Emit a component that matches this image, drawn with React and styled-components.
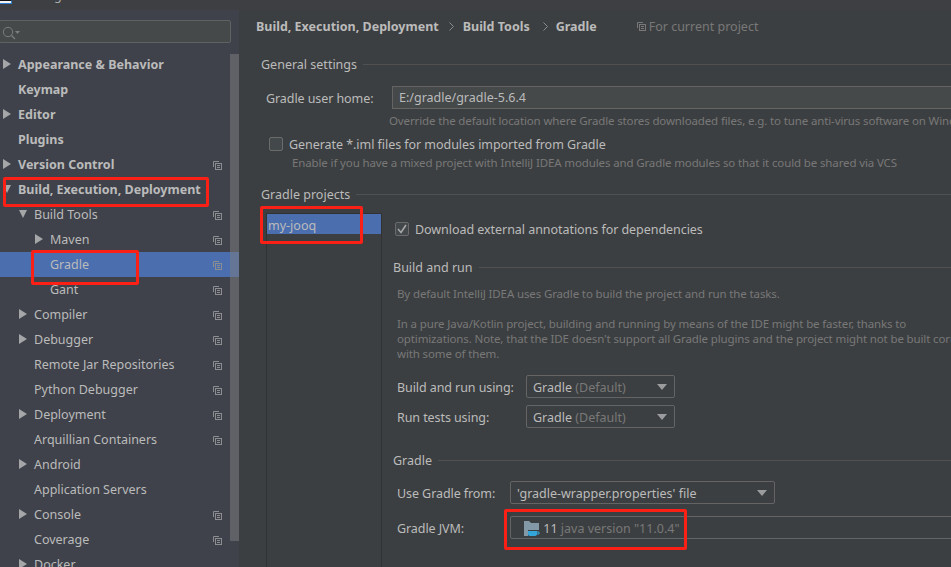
import React from 'react';
import styled, { createGlobalStyle } from 'styled-components';

const GlobalStyle = createGlobalStyle`
  html, body {
    margin: 0;
    height: 100%;
    overflow: hidden;
    background: #3c3f41;
  }
  #root {
    height: 100%;
  }
`;

const Page = styled.div`
  position: relative;
  width: 951px;
  height: 567px;
  overflow: hidden;
  background: #3c3f41;
  color: #bbbbbb;
  font-family: "Noto Sans", "Liberation Sans", sans-serif;
  font-size: 12.5px;
  line-height: 17px;
  display: flex;
  flex-direction: column;
`;

const TitleBar = styled.div`
  height: 10px;
  flex: none;
  overflow: hidden;
  display: flex;
  align-items: flex-start;
  background: #3d3f42;
`;

const AppIcon = styled.span`
  width: 11px;
  height: 2px;
  flex: none;
  background: #f2f2f2;
  border-top: 1px solid #111111;
  border-right: 1px solid #2f7fd0;
  border-bottom: 1px solid #2f7fd0;
`;

const TitleText = styled.span`
  margin: -13px 0 0 8px;
  color: #a9abad;
`;

const Body = styled.div`
  flex: 1;
  min-height: 0;
  display: flex;
`;

const Sidebar = styled.aside`
  position: relative;
  width: 239px;
  flex: none;
  overflow: hidden;
  background: #3f424a;
  padding-top: 10px;
  box-sizing: border-box;
`;

const SearchBox = styled.div`
  height: 23px;
  width: 232px;
  margin-left: -1px;
  box-sizing: border-box;
  display: flex;
  align-items: center;
  padding-left: 3px;
  border: 1px solid #5f6261;
  border-radius: 2px;
  background: #45494a;
`;

const Tree = styled.div`
  margin-top: 9px;
`;

const Row = styled.div`
  height: 25px;
  display: flex;
  align-items: center;
  padding-left: ${props => props.$level * 16 + 18}px;
  background: ${props => (props.$selected ? '#4b6eaf' : 'transparent')};
  font-weight: ${props => (props.$bold ? 700 : 400)};
  color: #bbbbbb;
  position: relative;
`;

const RowArrow = styled.span`
  position: absolute;
  left: ${props => props.$level * 16 + 3}px;
  top: ${props => (props.$open ? 8 : 7)}px;
  width: 0;
  height: 0;
  ${props => (props.$open
    ? 'border-left: 4px solid transparent; border-right: 4px solid transparent; border-top: 8px solid #a4a6a8;'
    : 'border-top: 5px solid transparent; border-bottom: 5px solid transparent; border-left: 8px solid #a4a6a8;')}
`;

const RowCopy = styled.span`
  position: absolute;
  left: 213px;
  top: 9px;
  display: flex;
`;

const Scrollbar = styled.div`
  position: absolute;
  left: 230px;
  top: 44px;
  width: 9px;
  height: 487px;
  background: rgba(122, 124, 128, 0.55);
`;

const Content = styled.main`
  flex: 1;
  min-width: 0;
  overflow: hidden;
  padding: 8px 0 0 17px;
`;

const Breadcrumb = styled.div`
  height: 17px;
  display: flex;
  align-items: center;
  font-weight: 700;
  color: #bbbbbb;
  white-space: nowrap;
`;

const CrumbArrow = styled.svg`
  margin: 0 ${props => props.$right}px 0 ${props => props.$left}px;
  flex: none;
`;

const ProjectHint = styled.span`
  display: flex;
  align-items: center;
  gap: 3px;
  margin-left: 40px;
  font-weight: 400;
  color: #787878;
`;

const Section = styled.div`
  display: flex;
  align-items: center;
  gap: 6px;
  margin: ${props => props.$top}px 0 0 ${props => props.$left || 5}px;
  height: 17px;
  white-space: nowrap;
`;

const SectionLine = styled.span`
  flex: 1;
  height: 1px;
  background: #515151;
`;

const FieldRow = styled.div`
  display: flex;
  align-items: center;
  height: 23px;
  margin: ${props => props.$top}px 0 0 ${props => props.$left}px;
  white-space: nowrap;
`;

const FieldLabel = styled.span`
  width: ${props => props.$width}px;
  flex: none;
  padding-top: 2px;
  letter-spacing: -0.08px;
`;

const TextField = styled.div`
  flex: 1;
  height: 23px;
  box-sizing: border-box;
  margin-right: -4px;
  padding: 2px 6px;
  border: 1px solid #646464;
  border-right: 0;
  background: #45494a;
`;

const Combo = styled.div`
  width: ${props => props.$width}px;
  height: 23px;
  flex: none;
  box-sizing: border-box;
  display: flex;
  align-items: center;
  padding: 2px ${props => props.$inset || 6}px 0;
  border: 1px solid #646464;
  border-radius: 2px;
  position: relative;
`;

const ComboCaret = styled.span`
  position: absolute;
  right: 7px;
  top: 8px;
  width: 0;
  height: 0;
  border-left: 5px solid transparent;
  border-right: 5px solid transparent;
  border-top: 6px solid #9a9c9e;
`;

const Muted = styled.span`
  color: #787878;
  white-space: pre;
`;

const Hint = styled.div`
  color: #787878;
  margin: ${props => props.$top || 0}px 0 0 ${props => props.$left}px;
  white-space: nowrap;
  font-size: 11.5px;
  letter-spacing: -0.13px;
  line-height: 15px;
`;

const CheckRow = styled.label`
  display: flex;
  align-items: center;
  gap: 6px;
  height: 17px;
  margin: ${props => props.$top}px 0 0 ${props => props.$left}px;
  white-space: nowrap;
`;

const CheckText = styled.span`
  padding-top: 2px;
  letter-spacing: -0.05px;
`;

const Box = styled.span`
  width: 14px;
  height: 14px;
  box-sizing: border-box;
  flex: none;
  display: flex;
  align-items: center;
  justify-content: center;
  border: 1px solid #6b6b6b;
  border-radius: 2px;
  background: #43494a;
`;

const Projects = styled.div`
  display: flex;
  margin: 10px 0 0 10px;
  height: 360px;
`;

const ProjectList = styled.div`
  width: 116px;
  flex: none;
  box-sizing: border-box;
  border: 1px solid #323232;
  border-width: 1px 1px 0;
`;

const ProjectItem = styled.div`
  height: 20px;
  padding-left: 1px;
  background: #4b6eaf;
  line-height: 23px;
`;

const ProjectPane = styled.div`
  flex: 1;
  min-width: 0;
  padding-left: 10px;
`;

const Note = styled.div`
  margin: ${props => props.$top}px 0 0 5px;
  color: #787878;
  font-size: 11.5px;
  letter-spacing: -0.13px;
  line-height: 15px;
  white-space: nowrap;
`;

const Mark = styled.div`
  position: absolute;
  left: ${props => props.$x}px;
  top: ${props => props.$y}px;
  width: ${props => props.$w}px;
  height: ${props => props.$h}px;
  box-sizing: border-box;
  border: 3px solid #fb2016;
  border-radius: 2px;
  pointer-events: none;
`;

const CopyIcon = ({ color = '#8b8d90' }) => (
  <svg width="9" height="9" viewBox="0 0 9 9" fill="none" stroke={color} strokeWidth="1">
    <path d="M0.5 6V0.5H6" />
    <rect x="2.5" y="2.5" width="6" height="6" />
    <path d="M4 4.5H7M4 6.5H7" />
  </svg>
);

const SearchIcon = () => (
  <svg width="19" height="16" viewBox="0 0 19 16" fill="none">
    <circle cx="5" cy="8" r="4.7" stroke="#7c7f80" strokeWidth="1" />
    <path d="M8.5 11.5L12 15" stroke="#7c7f80" strokeWidth="1.3" />
    <path d="M12 7H17L14.5 10Z" fill="#7c7f80" />
  </svg>
);

const JdkIcon = () => (
  <svg width="16" height="15" viewBox="0 0 16 15">
    <path d="M0 0H5L7 2H15V9H4V15H0Z" fill="#8399a8" />
    <path d="M4 10H13V13C13 14.5 12 15 10.5 15H6.5C5 15 4 14.5 4 13Z" fill="#33a5d8" />
    <path d="M13 11H15V13H13" fill="none" stroke="#33a5d8" />
  </svg>
);

const TREE = [
  { label: 'Appearance & Behavior', level: 0, bold: true, arrow: 'closed' },
  { label: 'Keymap', level: 0, bold: true },
  { label: 'Editor', level: 0, bold: true, arrow: 'closed' },
  { label: 'Plugins', level: 0, bold: true },
  { label: 'Version Control', level: 0, bold: true, arrow: 'closed', copy: true },
  { label: 'Build, Execution, Deployment', level: 0, bold: true, arrow: 'open' },
  { label: 'Build Tools', level: 1, arrow: 'open', copy: true },
  { label: 'Maven', level: 2, arrow: 'closed', copy: true },
  { label: 'Gradle', level: 2, selected: true, copy: true },
  { label: 'Gant', level: 2, copy: true },
  { label: 'Compiler', level: 1, arrow: 'closed', copy: true },
  { label: 'Debugger', level: 1, arrow: 'closed', copy: true },
  { label: 'Remote Jar Repositories', level: 1, copy: true },
  { label: 'Python Debugger', level: 1, copy: true },
  { label: 'Deployment', level: 1, arrow: 'closed', copy: true },
  { label: 'Arquillian Containers', level: 1, copy: true },
  { label: 'Android', level: 1, arrow: 'closed' },
  { label: 'Application Servers', level: 1 },
  { label: 'Console', level: 1, arrow: 'closed', copy: true },
  { label: 'Coverage', level: 1, copy: true },
  { label: 'Docker', level: 1, arrow: 'closed' },
];

const MARKS = [
  { x: 3, y: 177, w: 206, h: 30 },
  { x: 31, y: 250, w: 108, h: 35 },
  { x: 260, y: 206, w: 103, h: 38 },
  { x: 504, y: 509, w: 183, h: 41 },
];

const Crumb = ({ left, right }) => (
  <CrumbArrow $left={left} $right={right} width="5" height="9" viewBox="0 0 5 9" fill="none" stroke="#8a8c8e">
    <path d="M0.5 0.5L4.5 4.5L0.5 8.5" />
  </CrumbArrow>
);

const App = () => (
  <Page>
    <GlobalStyle />
    <TitleBar>
      <AppIcon />
      <TitleText>Settings</TitleText>
    </TitleBar>
    <Body>
      <Sidebar>
        <SearchBox>
          <SearchIcon />
        </SearchBox>
        <Tree>
          {TREE.map(item => (
            <Row key={item.label} $level={item.level} $bold={item.bold} $selected={item.selected}>
              {item.arrow && <RowArrow $level={item.level} $open={item.arrow === 'open'} />}
              {item.label}
              {item.copy && (
                <RowCopy>
                  <CopyIcon />
                </RowCopy>
              )}
            </Row>
          ))}
        </Tree>
        <Scrollbar />
      </Sidebar>
      <Content>
        <Breadcrumb>
          Build, Execution, Deployment
          <Crumb left={10} right={9} />
          Build Tools
          <Crumb left={13} right={8} />
          Gradle
          <ProjectHint>
            <CopyIcon color="#787878" />
            For current project
          </ProjectHint>
        </Breadcrumb>
        <Section $top={21}>
          General settings
          <SectionLine />
        </Section>
        <FieldRow $top={13} $left={10}>
          <FieldLabel $width={126}>Gradle user home:</FieldLabel>
          <TextField>E:/gradle/gradle-5.6.4</TextField>
        </FieldRow>
        <Hint $top={4} $left={133}>
          Override the default location where Gradle stores downloaded files, e.g. to tune anti-virus software on Windows
        </Hint>
        <CheckRow $top={7} $left={13}>
          <Box />
          <CheckText>Generate *.iml files for modules imported from Gradle</CheckText>
        </CheckRow>
        <Hint $top={3} $left={36}>
          Enable if you have a mixed project with IntelliJ IDEA modules and Gradle modules so that it could be shared via VCS
        </Hint>
        <Section $top={16}>
          Gradle projects
          <SectionLine />
        </Section>
        <Projects>
          <ProjectList>
            <ProjectItem>my-jooq</ProjectItem>
          </ProjectList>
          <ProjectPane>
            <CheckRow $top={7} $left={3}>
              <Box>
                <svg width="10" height="10" viewBox="0 0 10 10" fill="none" stroke="#a7a7a7" strokeWidth="1.6">
                  <path d="M1 5L4 8.5L9 1" />
                </svg>
              </Box>
              <CheckText>Download external annotations for dependencies</CheckText>
            </CheckRow>
            <Section $top={22} $left={1}>
              Build and run
              <SectionLine />
            </Section>
            <Note $top={10}>By default IntelliJ IDEA uses Gradle to build the project and run the tasks.</Note>
            <Note $top={15}>In a pure Java/Kotlin project, building and running by means of the IDE might be faster, thanks to</Note>
            <Note $top={0}>optimizations. Note, that the IDE doesn't support all Gradle plugins and the project might not be built correctly</Note>
            <Note $top={0}>with some of them.</Note>
            <FieldRow $top={14} $left={5}>
              <FieldLabel $width={129}>Build and run using:</FieldLabel>
              <Combo $width={149}>
                Gradle<Muted> (Default)</Muted>
                <ComboCaret />
              </Combo>
            </FieldRow>
            <FieldRow $top={7} $left={5}>
              <FieldLabel $width={129}>Run tests using:</FieldLabel>
              <Combo $width={149}>
                Gradle<Muted> (Default)</Muted>
                <ComboCaret />
              </Combo>
            </FieldRow>
            <Section $top={24} $left={1}>
              Gradle
              <SectionLine />
            </Section>
            <FieldRow $top={12} $left={5}>
              <FieldLabel $width={113}>Use Gradle from:</FieldLabel>
              <Combo $width={265}>
                'gradle-wrapper.properties' file
                <ComboCaret />
              </Combo>
            </FieldRow>
            <FieldRow $top={12} $left={5}>
              <FieldLabel $width={113}>Gradle JVM:</FieldLabel>
              <Combo $width={460} $inset={13}>
                <JdkIcon />
                <span>&nbsp;11</span>
                <Muted> java version "11.0.4"</Muted>
              </Combo>
            </FieldRow>
          </ProjectPane>
        </Projects>
      </Content>
    </Body>
    {MARKS.map(mark => (
      <Mark key={mark.x} $x={mark.x} $y={mark.y} $w={mark.w} $h={mark.h} />
    ))}
  </Page>
);

export default App;
